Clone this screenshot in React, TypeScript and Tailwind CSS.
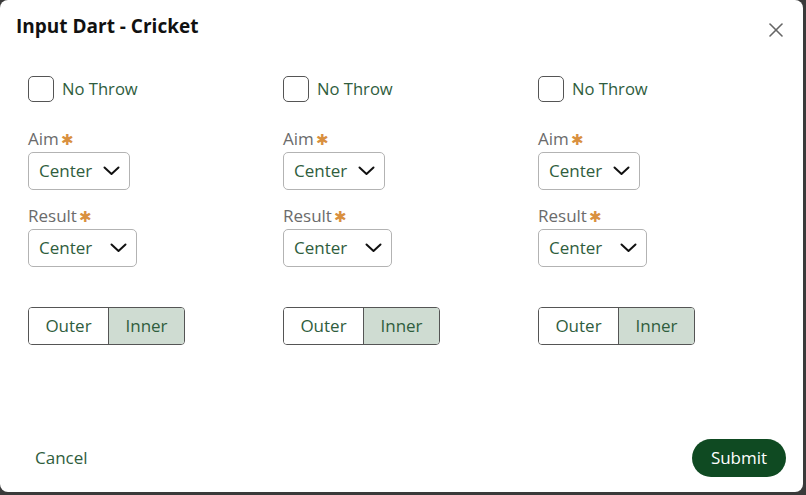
import {X} from 'lucide-react';

const columns = [0, 1, 2];

function Chevron() {
  return (
    <svg width="17" height="10" viewBox="0 0 17 10" fill="none" className="shrink-0">
      <path d="M1.5 1.5 L8.5 8 L15.5 1.5" stroke="#111" strokeWidth="2" strokeLinecap="round" strokeLinejoin="round" />
    </svg>
  );
}

function Field({label, width}: {label: string; width: string}) {
  return (
    <div className="flex flex-col">
      <div className="flex h-[24px] items-center text-[17px] text-[#6b6b6b]">
        {label}
        <span className="ml-[2px] text-[15px] text-[#d9903f]">✱</span>
      </div>
      <div
        className={`mt-[1px] flex h-[38px] items-center justify-between rounded-[5px] border border-[#b3b3b3] pl-[10px] pr-[9px] text-[17px] text-[#2f5d3d] ${width}`}
      >
        <span>Center</span>
        <Chevron />
      </div>
    </div>
  );
}

function DartColumn() {
  return (
    <div className="flex w-[255px] flex-col">
      <label className="flex h-[26px] items-center gap-[8px]">
        <span className="h-[26px] w-[26px] rounded-[5px] border-[1.5px] border-[#555]" />
        <span className="text-[16.6px] text-[#2f5d3d]">No Throw</span>
      </label>
      <div className="mt-[25px]">
        <Field label="Aim" width="w-[102px]" />
      </div>
      <div className="mt-[14px]">
        <Field label="Result" width="w-[109px]" />
      </div>
      <div className="mt-[40px] flex h-[38px] w-[157px] overflow-hidden rounded-[4px] border border-[#555] text-[17px] text-[#2f5d3d]">
        <button type="button" className="flex w-[80px] items-center justify-center border-r border-[#555] bg-white">
          Outer
        </button>
        <button type="button" className="flex flex-1 items-center justify-center bg-[#cfdcd2]">
          Inner
        </button>
      </div>
    </div>
  );
}

export default function App() {
  return (
    <div className="h-[495px] w-[806px] bg-[#3a3a3a] font-['Open_Sans',sans-serif]">
      <div className="flex h-[492px] w-[803px] flex-col rounded-[8px] bg-white">
        <div className="flex items-start justify-between pl-[16px] pr-[15px] pt-[13px]">
          <h2 className="text-[19px] font-bold leading-[26px] text-[#111]">Input Dart - Cricket</h2>
          <button type="button" className="mt-[5px] text-[#666]" aria-label="Close">
            <X size={24} strokeWidth={1.6} />
          </button>
        </div>

        <div className="mt-[34px] flex pl-[28px]">
          {columns.map((c) => (
            <DartColumn key={c} />
          ))}
        </div>

        <div className="mt-auto flex items-center justify-between pb-[15px] pl-[35px] pr-[17px]">
          <button type="button" className="text-[17px] text-[#2f5d3d]">
            Cancel
          </button>
          <button type="button" className="flex h-[38px] w-[94px] items-center justify-center rounded-full bg-[#0f4a22] text-[17px] text-white">
            Submit
          </button>
        </div>
      </div>
    </div>
  );
}
